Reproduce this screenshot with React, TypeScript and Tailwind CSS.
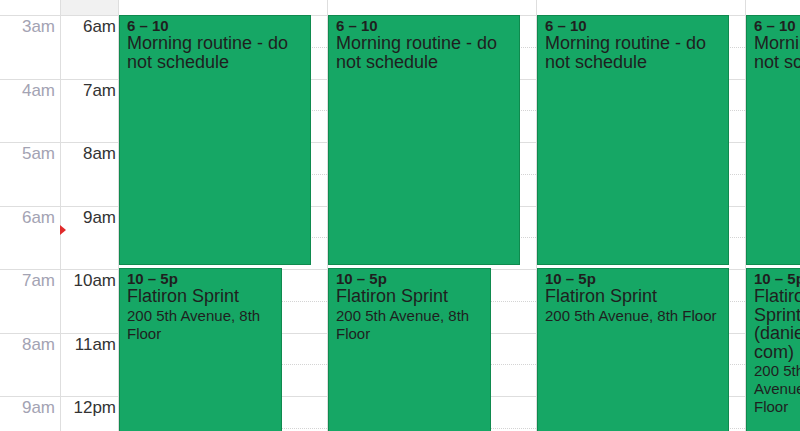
type CalEvent = {
  top: number;
  height: number;
  width: number;
  time: string;
  title: string;
  location?: string;
};

const leftHours = ["3am", "4am", "5am", "6am", "7am", "8am", "9am"];
const mainHours = ["6am", "7am", "8am", "9am", "10am", "11am", "12pm"];

const morning = (width: number): CalEvent => ({
  top: 0,
  height: 250,
  width,
  time: "6 – 10",
  title: "Morning routine - do not schedule",
});

const sprint = (width: number, title = "Flatiron Sprint"): CalEvent => ({
  top: 253,
  height: 300,
  width,
  time: "10 – 5p",
  title,
  location: "200 5th Avenue, 8th Floor",
});

const days: CalEvent[][] = [
  [morning(192), sprint(163)],
  [morning(192), sprint(163)],
  [morning(192), sprint(192)],
  [morning(192), sprint(104, "Flatiron Sprint (daniel@x.\u200Bcom)")],
];

function HourRow({ dotted }: { dotted?: boolean }) {
  return (
    <div className="h-[63.5px] border-t border-[#dedede]">
      {dotted ? <div className="h-[31.5px] border-b border-dotted border-[#d4d4d4]" /> : null}
    </div>
  );
}

function EventBox({ ev }: { ev: CalEvent }) {
  return (
    <div
      className="absolute left-0 overflow-hidden border border-[#0f8a4e] bg-[#16a765] pl-[7px] pr-[5px] pt-[2px] text-[#1f1f1f]"
      style={{ top: ev.top, height: ev.height, width: ev.width }}
    >
      <div className="text-[15px] font-bold leading-[16px]">{ev.time}</div>
      <div className="text-[18px] leading-[18.5px] [overflow-wrap:break-word]">{ev.title}</div>
      {ev.location ? (
        <div className="mt-[1px] text-[15px] leading-[18px]">{ev.location}</div>
      ) : null}
    </div>
  );
}

export default function App() {
  return (
    <div className="flex h-[431px] w-[800px] overflow-hidden bg-white font-['Liberation_Sans',Arial,sans-serif]">
      <div className="w-[61px] shrink-0 border-r border-[#dedede]">
        <div className="h-[15px]" />
        {leftHours.map((h) => (
          <div key={h} className="h-[63.5px] border-t border-[#dedede] pr-[5px] pt-[1px] text-right text-[17px] leading-[20px] text-[#a3a3b3]">
            {h}
          </div>
        ))}
      </div>

      <div className="relative w-[58px] shrink-0 border-r border-[#dedede]">
        <div className="h-[15px] bg-[#f1f1f1]" />
        {mainHours.map((h) => (
          <div key={h} className="h-[63.5px] border-t border-[#dedede] pr-[2px] pt-[1px] text-right text-[17px] leading-[20px] text-[#333333]">
            {h}
          </div>
        ))}
        <div className="absolute -left-[1px] top-[225px] h-0 w-0 border-y-[5px] border-l-[6px] border-y-transparent border-l-[#e02b2b]" />
      </div>

      {days.map((events, i) => (
        <div key={i} className="w-[209px] shrink-0 border-r border-[#dedede]">
          <div className="h-[15px]" />
          <div className="relative">
            {mainHours.map((h) => (
              <HourRow key={h} dotted />
            ))}
            {events.map((ev, j) => (
              <EventBox key={j} ev={ev} />
            ))}
          </div>
        </div>
      ))}
    </div>
  );
}
